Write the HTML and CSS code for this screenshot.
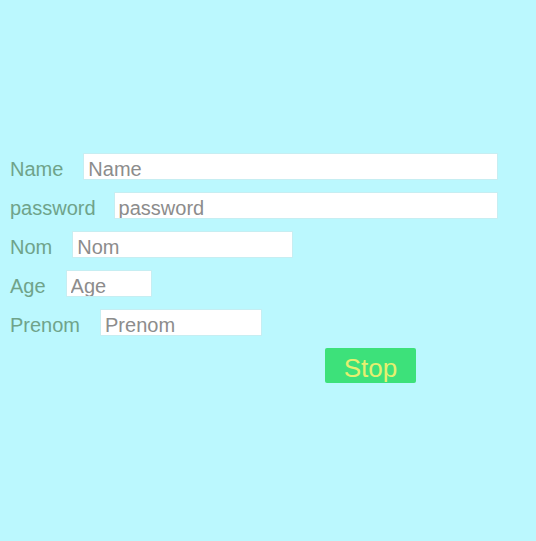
FILE: index.html
```html
<!DOCTYPE html>
<html>
<head>
<meta charset="utf-8">
<link rel="stylesheet" href="styles.css">
</head>
<body>
<form class="form">
  <div class="row"><label class="label">Name</label><input class="field w-name" placeholder="Name"></div>
  <div class="row"><label class="label label-pass">password</label><input class="field w-pass" placeholder="password"></div>
  <div class="row"><label class="label">Nom</label><input class="field w-nom" placeholder="Nom"></div>
  <div class="row"><label class="label">Age</label><input class="field w-age" placeholder="Age"></div>
  <div class="row"><label class="label">Prenom</label><input class="field w-prenom" placeholder="Prenom"></div>
  <div class="row row-btn"><button type="button" class="stop">Stop</button></div>
</form>
</body>
</html>
```
FILE: styles.css
```css
html, body {
  margin: 0;
  padding: 0;
  background: #bbf8fe;
  height: 100%;
}
body {
  font-family: "Liberation Sans", Arial, sans-serif;
}
.form {
  display: flex;
  flex-direction: column;
  gap: 12px;
  padding: 153px 0 0 10px;
}
.row {
  display: flex;
  align-items: center;
  height: 27px;
}
.label {
  font-size: 20px;
  color: #6fa38a;
  margin-right: 20px;
  line-height: 23px;
  padding-top: 5px;
}
.label-pass {
  margin-right: 18px;
}
.field {
  box-sizing: border-box;
  height: 27px;
  border: 1px solid #c6eef2;
  background: #ffffff;
  padding: 5px 3px 0 4px;
  font-family: "Liberation Sans", Arial, sans-serif;
  font-size: 20px;
  color: #555;
  outline: none;
  margin: 0;
}
.field::placeholder {
  color: #8c8c8c;
  opacity: 1;
}
.w-name { width: 415px; }
.w-pass { width: 384px; }
.w-nom { width: 221px; }
.w-age { width: 86px; }
.w-prenom { width: 162px; }
.row-btn {
  height: 35px;
}
.stop {
  margin-left: 315px;
  width: 91px;
  height: 35px;
  border: none;
  border-radius: 2px;
  background: #3de17a;
  color: #e6ef70;
  font-family: "Liberation Sans", Arial, sans-serif;
  font-size: 26px;
  padding: 5px 0 0 0;
}
```
